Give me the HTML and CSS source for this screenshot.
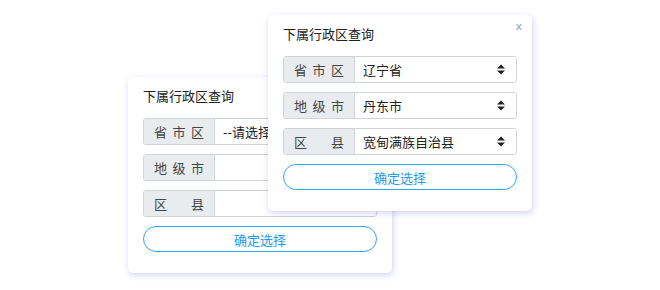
FILE: index.html
```html
<!DOCTYPE html>
<html lang="zh">
<head>
    <meta charset="UTF-8">
    <title>下属行政区查询</title>
    <link rel="stylesheet" href="styles.css">
</head>
<body>
    <div class="desk">
        <div class="card card-back">
            <div class="title">下属行政区查询</div>
            <div class="row">
                <span class="label">省 市 区</span>
                <div class="pick">--请选择<svg class="arrow" width="8" height="11" viewBox="0 0 8 11"><path d="M0 4.5L4 0.5L8 4.5Z M0 6.5L4 10.5L8 6.5Z" fill="#222"/></svg></div>
            </div>
            <div class="row">
                <span class="label">地 级 市</span>
                <div class="pick"><svg class="arrow" width="8" height="11" viewBox="0 0 8 11"><path d="M0 4.5L4 0.5L8 4.5Z M0 6.5L4 10.5L8 6.5Z" fill="#222"/></svg></div>
            </div>
            <div class="row">
                <span class="label">区 县</span>
                <div class="pick"><svg class="arrow" width="8" height="11" viewBox="0 0 8 11"><path d="M0 4.5L4 0.5L8 4.5Z M0 6.5L4 10.5L8 6.5Z" fill="#222"/></svg></div>
            </div>
            <button type="button" class="ok">确定选择</button>
        </div>

        <div class="card card-front">
            <span class="close">x</span>
            <div class="title">下属行政区查询</div>
            <div class="row">
                <span class="label">省 市 区</span>
                <div class="pick">辽宁省<svg class="arrow" width="8" height="11" viewBox="0 0 8 11"><path d="M0 4.5L4 0.5L8 4.5Z M0 6.5L4 10.5L8 6.5Z" fill="#222"/></svg></div>
            </div>
            <div class="row">
                <span class="label">地 级 市</span>
                <div class="pick">丹东市<svg class="arrow" width="8" height="11" viewBox="0 0 8 11"><path d="M0 4.5L4 0.5L8 4.5Z M0 6.5L4 10.5L8 6.5Z" fill="#222"/></svg></div>
            </div>
            <div class="row">
                <span class="label">区 县</span>
                <div class="pick">宽甸满族自治县<svg class="arrow" width="8" height="11" viewBox="0 0 8 11"><path d="M0 4.5L4 0.5L8 4.5Z M0 6.5L4 10.5L8 6.5Z" fill="#222"/></svg></div>
            </div>
            <button type="button" class="ok">确定选择</button>
        </div>
    </div>
</body>
</html>
```

FILE: styles.css
```css
body {
    margin: 0;
    background: #ffffff;
    font-family: "Noto Sans CJK SC", "Noto Sans", sans-serif;
    font-size: 13px;
    color: #333;
}
.desk {
    position: relative;
    width: 660px;
    height: 290px;
}
.card {
    position: absolute;
    width: 264px;
    box-sizing: border-box;
    padding: 10px 15px 21px 15px;
    background: #ffffff;
    border-radius: 5px;
    box-shadow: 1px 2px 6px rgba(120, 120, 240, 0.35);
    display: flex;
    flex-direction: column;
    gap: 9px;
}
.card-back {
    left: 128px;
    top: 77px;
}
.card-front {
    left: 268px;
    top: 15px;
}
.title {
    height: 18px;
    line-height: 18px;
    font-size: 13px;
    color: #222;
    margin-bottom: 4px;
}
.close {
    position: absolute;
    right: 10px;
    top: 5px;
    font-family: "DejaVu Sans", sans-serif;
    font-size: 11px;
    color: #8aa0c8;
}
.row {
    display: flex;
    height: 27px;
    box-sizing: border-box;
    border: 1px solid #ced4da;
    border-radius: 3px;
    overflow: hidden;
}
.label {
    width: 71px;
    box-sizing: border-box;
    padding: 0 10px 0 10px;
    background: #e9ecef;
    border-right: 1px solid #ced4da;
    line-height: 25px;
    color: #444;
    text-align: justify;
    text-align-last: justify;
}
.pick {
    flex: 1;
    display: flex;
    align-items: center;
    justify-content: space-between;
    padding: 0 11px 0 8px;
    background: #ffffff;
    color: #222;
}
.arrow {
    margin-left: auto;
}
.ok {
    height: 26px;
    border: 1px solid #2ea7f5;
    border-radius: 13px;
    background: #ffffff;
    color: #1e9be8;
    font-family: "Noto Sans CJK SC", "Noto Sans", sans-serif;
    font-size: 13px;
    padding: 0;
}
```
